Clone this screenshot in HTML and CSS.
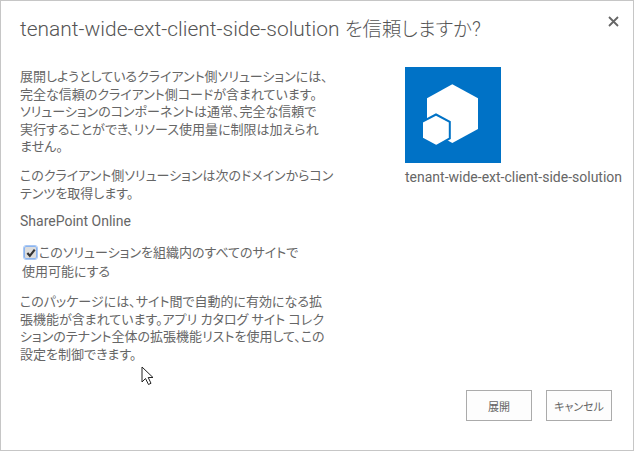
FILE: index.html
```html
<!DOCTYPE html>
<html lang="ja">
<head>
<meta charset="utf-8">
<title>信頼</title>
<link rel="stylesheet" href="styles.css">
</head>
<body>
<div class="dialog">
  <header class="head">
    <h1 class="title">tenant-wide-ext-client-side-solution <span class="title-ja">を信頼しますか?</span></h1>
    <svg class="close" width="11" height="11" viewBox="0 0 11 11"><path d="M1 1L10 10M10 1L1 10" stroke="#666" stroke-width="1.8" fill="none"/></svg>
  </header>
  <div class="content">
    <div class="left">
      <p class="para">展開しようとしているクライアント側ソリューションには、<br>完全な信頼のクライアント側コードが含まれています。<br>ソリューションのコンポーネントは通常、完全な信頼で<br>実行することができ、リソース使用量に制限は加えられ<br>ません。</p>
      <p class="para">このクライアント側ソリューションは次のドメインからコン<br>テンツを取得します。</p>
      <p class="para latin">SharePoint Online</p>
      <div class="check-block">
        <div class="check-line"><span class="check"><svg width="10" height="10" viewBox="0 0 11 11"><path d="M1.500 5.500L4.200 8.600L9.600 1.800" stroke="#333" stroke-width="2.400" fill="none"/></svg></span><span>このソリューションを組織内のすべてのサイトで</span></div>
        <div class="check-second">使用可能にする</div>
      </div>
      <p class="para">このパッケージには、サイト間で自動的に有効になる拡<br>張機能が含まれています。アプリ カタログ サイト コレク<br>ションのテナント全体の拡張機能リストを使用して、この<br>設定を制御できます。</p>
    </div>
    <div class="right">
      <div class="logo">
        <svg width="96" height="96" viewBox="0 0 96 96">
          <path d="M47.300 17.300L73 31.300V62L47.300 76L22 62V31.300Z" fill="#fff"/>
          <path d="M31 47.500L44.800 54.800V71.300L31 79L17 71.300V54.800Z" fill="#fff" stroke="#0072c6" stroke-width="2"/>
        </svg>
      </div>
      <div class="caption">tenant-wide-ext-client-side-solution</div>
    </div>
  </div>
  <footer class="actions">
    <button class="btn">展開</button>
    <button class="btn">キャンセル</button>
  </footer>
  <svg class="cursor" width="13" height="20" viewBox="0 0 13 20"><path d="M1 1V16L4.500 12.500L7.500 18.500L10 17.300L7.200 11.500H12Z" fill="#fff" stroke="#222" stroke-width="1"/></svg>
</div>
</body>
</html>
```
FILE: styles.css
```css
html, body {
  margin: 0;
  padding: 0;
  background: #fff;
}
.dialog {
  position: relative;
  box-sizing: border-box;
  width: 634px;
  height: 451px;
  border: 1px solid #c6c6c6;
  background: #fff;
  color: #666;
  font-family: Roboto, "Noto Sans CJK JP", sans-serif;
  font-feature-settings: "palt";
  font-size: 13px;
  font-weight: 400;
  line-height: 17.500px;
  display: flex;
  flex-direction: column;
}
.head {
  display: flex;
  justify-content: space-between;
  align-items: flex-start;
  padding: 15px 14px 0 19px;
  height: 51px;
  box-sizing: border-box;
}
.title {
  margin: 0;
  font-size: 20.950px;
  font-weight: 300;
  line-height: 26px;
  color: #555;
}
.title-ja {
  font-size: 19.400px;
}
.content {
  display: flex;
  flex: 1;
  padding-left: 19px;
}
.left {
  width: 385px;
  padding-top: 16px;
}
.para {
  margin: 0 0 11.500px;
}
.latin {
  font-size: 14px;
  margin-top: -1px;
  margin-bottom: 13px;
}
.check-block {
  margin: 0 0 12px;
  padding-left: 2px;
}
.check-line {
  display: flex;
  align-items: center;
  height: 19px;
}
.check {
  box-sizing: border-box;
  width: 13px;
  height: 13px;
  margin-left: 2px;
  margin-right: 2px;
  border: 1px solid #8ab4f0;
  outline: 1px solid #a9c8f5;
  border-radius: 2px;
  background: #ddd;
  display: flex;
  align-items: center;
  justify-content: center;
}
.check-second {
  height: 19px;
  line-height: 19px;
}
.right {
  padding-top: 15px;
}
.logo {
  width: 96px;
  height: 96px;
  background: #0072c6;
}
.logo svg {
  display: block;
}
.caption {
  margin-top: 2px;
  font-size: 14px;
  line-height: 24px;
  white-space: nowrap;
}
.actions {
  display: flex;
  justify-content: flex-end;
  gap: 14px;
  padding: 0 21px 29px 0;
}
.btn {
  box-sizing: border-box;
  width: 66px;
  height: 31px;
  padding: 0;
  border: 1px solid #ababab;
  background: #fdfdfd;
  color: #666;
  font-family: Roboto, "Noto Sans CJK JP", sans-serif;
  font-feature-settings: "palt";
  font-size: 11px;
}
.cursor {
  position: absolute;
  left: 140px;
  top: 365px;
}
```
